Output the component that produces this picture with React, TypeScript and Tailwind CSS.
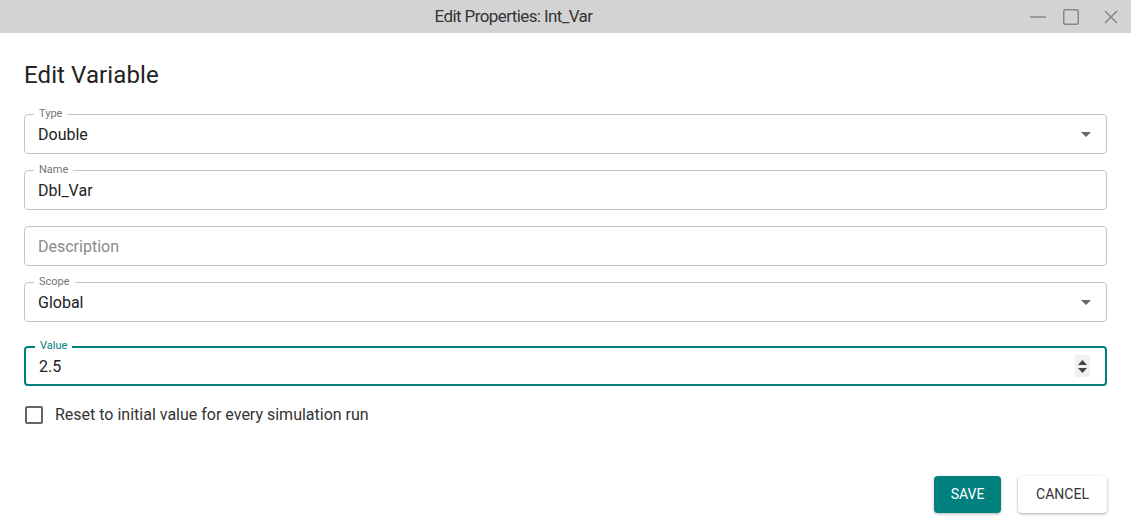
const font = "font-['Roboto','Liberation_Sans',sans-serif]";

function Field({
  label,
  value,
  placeholder,
  select,
  focused,
  spinner,
}: {
  label?: string;
  value?: string;
  placeholder?: string;
  select?: boolean;
  focused?: boolean;
  spinner?: boolean;
}) {
  return (
    <div
      className={`relative h-10 rounded flex items-center pl-[13px] pr-3 ${
        focused ? "border-2 border-[#00807f] pl-[12px]" : "border border-[#c4c4c4]"
      }`}
    >
      {label && (
        <span
          className={`absolute left-[9px] top-[-8px] px-[5px] bg-white text-[11px] leading-[14px] ${
            focused ? "text-[#00807f] top-[-9px] left-[8px]" : "text-[#757575]"
          }`}
        >
          {label}
        </span>
      )}
      <span className={`flex-1 text-[16px] pt-[2px] ${value ? "text-[#222]" : "text-[#8a8a8a]"}`}>
        {value || placeholder}
      </span>
      {select && (
        <svg width="10" height="5" viewBox="0 0 10 5" className="mr-[3px]">
          <path d="M0 0h10L5 5z" fill="#666" />
        </svg>
      )}
      {spinner && (
        <div className="w-[15px] h-[22px] bg-[#f0f0f0] flex flex-col items-center justify-center gap-[3px] mr-[3px]">
          <svg width="9" height="5" viewBox="0 0 9 5">
            <path d="M0 5h9L4.5 0z" fill="#444" />
          </svg>
          <svg width="9" height="5" viewBox="0 0 9 5">
            <path d="M0 0h9L4.5 5z" fill="#444" />
          </svg>
        </div>
      )}
    </div>
  );
}

export default function App() {
  return (
    <div className={`w-[1131px] h-[531px] bg-white ${font} overflow-hidden`}>
      <div className="h-[33px] bg-[#d3d3d3] relative flex items-center justify-center">
        <span className="text-[17px] text-[#333] tracking-[-0.6px] ml-[-104px]">Edit Properties: Int_Var</span>
        <div className="absolute right-0 top-0 h-full flex items-center">
          <svg width="16" height="16" viewBox="0 0 16 16" className="mr-[17px]">
            <path d="M0 8h16" stroke="#888" strokeWidth="1.5" />
          </svg>
          <svg width="16" height="16" viewBox="0 0 16 16" className="mr-[25px]">
            <rect x="0.75" y="0.75" width="14.5" height="14.5" rx="1.5" fill="none" stroke="#888" strokeWidth="1.5" />
          </svg>
          <svg width="14" height="14" viewBox="0 0 14 14" className="mr-[13px]">
            <path d="M1 1l12 12M13 1L1 13" stroke="#888" strokeWidth="1.5" />
          </svg>
        </div>
      </div>
      <div className="px-6">
        <h1 className="text-[24px] text-[#222] mt-[28px] leading-7 tracking-[0.1px]">Edit Variable</h1>
        <div className="mt-[25px] flex flex-col gap-4">
          <Field label="Type" value="Double" select />
          <Field label="Name" value="Dbl_Var" />
          <Field placeholder="Description" />
          <Field label="Scope" value="Global" select />
          <div className="mt-2">
            <Field label="Value" value="2.5" focused spinner />
          </div>
        </div>
        <label className="flex items-center gap-[12px] mt-[17px] ml-[1px]">
          <span className="w-[18px] h-[18px] border-2 border-[#666] rounded-[2px]" />
          <span className="text-[16px] text-[#333]">Reset to initial value for every simulation run</span>
        </label>
        <div className="flex justify-end gap-[17px] mt-[49px]">
          <button className="h-[37px] w-[67px] rounded bg-[#00807f] text-white text-[14px] shadow-[0_1px_3px_rgba(0,0,0,0.3)]">
            SAVE
          </button>
          <button className="h-[37px] w-[89px] rounded bg-white text-[#333] text-[14px] shadow-[0_1px_3px_rgba(0,0,0,0.35)]">
            CANCEL
          </button>
        </div>
      </div>
    </div>
  );
}
